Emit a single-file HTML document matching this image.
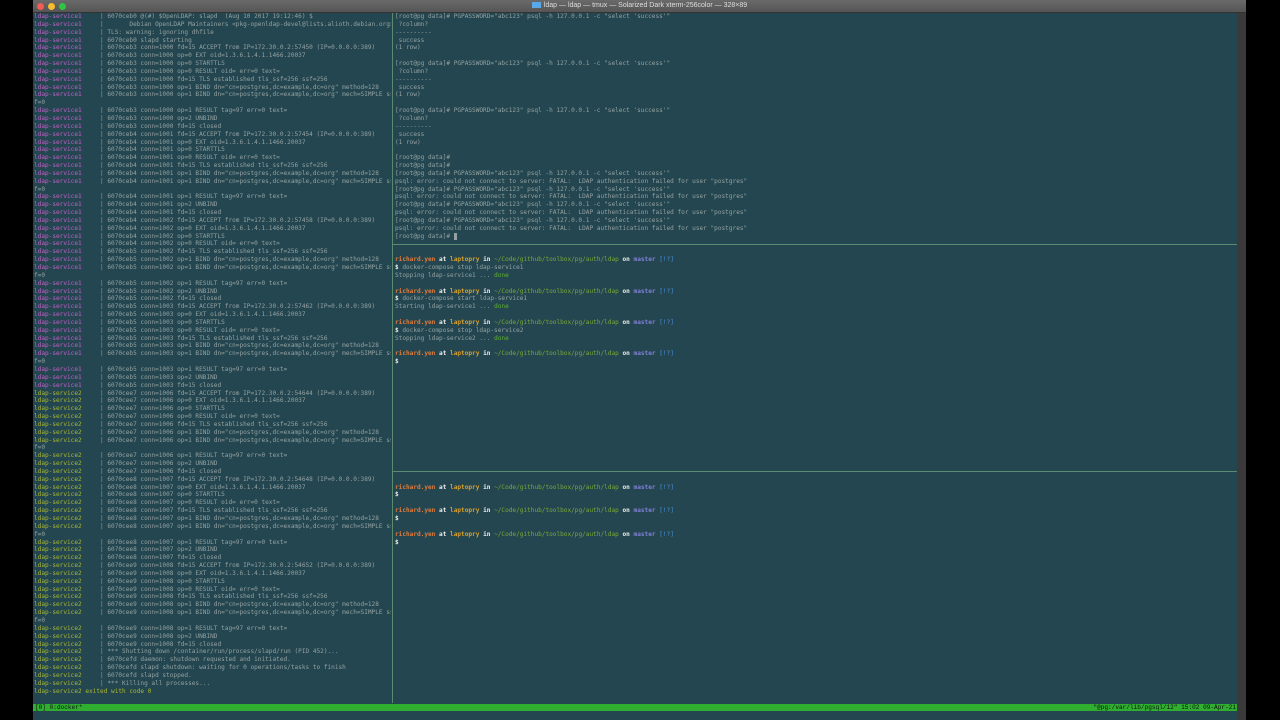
<!DOCTYPE html>
<html><head><meta charset="utf-8"><style>
body{margin:0;width:1280px;height:720px;background:#000;overflow:hidden;position:relative;font-family:"Liberation Mono",monospace}
#win{position:absolute;left:33px;top:0;width:1213px;height:720px;background:#244650}
#title{position:absolute;left:0;top:0;width:1213px;height:12px;background:linear-gradient(#6a6a6a,#555);border-bottom:1px solid #333;font-family:"Liberation Sans",sans-serif;font-size:7px;color:#ddd;text-align:center;line-height:12px}
.dot{position:absolute;top:3px;width:7px;height:7px;border-radius:50%}
#sb{position:absolute;left:1204px;top:13px;width:9px;height:707px;background:#3a3a3a}
pre{position:absolute;margin:0;font-size:6.1px;line-height:7.845px;color:#93a1a1;overflow:hidden;white-space:pre}
.a{color:#c060c8}.b{color:#a9b830}
.o{color:#e07a3a;font-weight:bold}.w{color:#eee;font-weight:bold}.y{color:#d8a030;font-weight:bold}.g{color:#7aa838}.m{color:#8080d8;font-weight:bold}.bl{color:#4a90d8}.d{color:#5fb030}
#vd{position:absolute;left:359px;top:13px;width:1px;height:690px;background:#5a8a70}
.hd{position:absolute;left:360px;width:844px;height:1px;background:#5a8a70}
#st{position:absolute;left:0;top:704px;width:1204px;height:7px;background:#2fae2f;font-size:6.1px;line-height:7px;color:#111}
</style></head><body>
<div id="win">
<div id="title"><span class="dot" style="left:4px;background:#f25c54"></span><span class="dot" style="left:15px;background:#f6be2f"></span><span class="dot" style="left:26px;background:#2fc63f"></span><span style="display:inline-block;width:9px;height:6px;background:#5aa9e6;vertical-align:middle;margin-right:3px"></span>ldap — ldap — tmux — Solarized Dark xterm-256color — 328×89</div>
<div id="sb"></div>
<pre style="left:1px;top:13px;width:357px;height:690px"><span class="a">ldap-service1</span>     | 6070ceb0 @(#) $OpenLDAP: slapd  (Aug 10 2017 19:12:46) $
<span class="a">ldap-service1</span>     |       Debian OpenLDAP Maintainers &lt;pkg-openldap-devel@lists.alioth.debian.org&gt;
<span class="a">ldap-service1</span>     | TLS: warning: ignoring dhfile
<span class="a">ldap-service1</span>     | 6070ceb0 slapd starting
<span class="a">ldap-service1</span>     | 6070ceb3 conn=1000 fd=15 ACCEPT from IP=172.30.0.2:57450 (IP=0.0.0.0:389)
<span class="a">ldap-service1</span>     | 6070ceb3 conn=1000 op=0 EXT oid=1.3.6.1.4.1.1466.20037
<span class="a">ldap-service1</span>     | 6070ceb3 conn=1000 op=0 STARTTLS
<span class="a">ldap-service1</span>     | 6070ceb3 conn=1000 op=0 RESULT oid= err=0 text=
<span class="a">ldap-service1</span>     | 6070ceb3 conn=1000 fd=15 TLS established tls_ssf=256 ssf=256
<span class="a">ldap-service1</span>     | 6070ceb3 conn=1000 op=1 BIND dn="cn=postgres,dc=example,dc=org" method=128
<span class="a">ldap-service1</span>     | 6070ceb3 conn=1000 op=1 BIND dn="cn=postgres,dc=example,dc=org" mech=SIMPLE ss
f=0
<span class="a">ldap-service1</span>     | 6070ceb3 conn=1000 op=1 RESULT tag=97 err=0 text=
<span class="a">ldap-service1</span>     | 6070ceb3 conn=1000 op=2 UNBIND
<span class="a">ldap-service1</span>     | 6070ceb3 conn=1000 fd=15 closed
<span class="a">ldap-service1</span>     | 6070ceb4 conn=1001 fd=15 ACCEPT from IP=172.30.0.2:57454 (IP=0.0.0.0:389)
<span class="a">ldap-service1</span>     | 6070ceb4 conn=1001 op=0 EXT oid=1.3.6.1.4.1.1466.20037
<span class="a">ldap-service1</span>     | 6070ceb4 conn=1001 op=0 STARTTLS
<span class="a">ldap-service1</span>     | 6070ceb4 conn=1001 op=0 RESULT oid= err=0 text=
<span class="a">ldap-service1</span>     | 6070ceb4 conn=1001 fd=15 TLS established tls_ssf=256 ssf=256
<span class="a">ldap-service1</span>     | 6070ceb4 conn=1001 op=1 BIND dn="cn=postgres,dc=example,dc=org" method=128
<span class="a">ldap-service1</span>     | 6070ceb4 conn=1001 op=1 BIND dn="cn=postgres,dc=example,dc=org" mech=SIMPLE ss
f=0
<span class="a">ldap-service1</span>     | 6070ceb4 conn=1001 op=1 RESULT tag=97 err=0 text=
<span class="a">ldap-service1</span>     | 6070ceb4 conn=1001 op=2 UNBIND
<span class="a">ldap-service1</span>     | 6070ceb4 conn=1001 fd=15 closed
<span class="a">ldap-service1</span>     | 6070ceb4 conn=1002 fd=15 ACCEPT from IP=172.30.0.2:57458 (IP=0.0.0.0:389)
<span class="a">ldap-service1</span>     | 6070ceb4 conn=1002 op=0 EXT oid=1.3.6.1.4.1.1466.20037
<span class="a">ldap-service1</span>     | 6070ceb4 conn=1002 op=0 STARTTLS
<span class="a">ldap-service1</span>     | 6070ceb4 conn=1002 op=0 RESULT oid= err=0 text=
<span class="a">ldap-service1</span>     | 6070ceb5 conn=1002 fd=15 TLS established tls_ssf=256 ssf=256
<span class="a">ldap-service1</span>     | 6070ceb5 conn=1002 op=1 BIND dn="cn=postgres,dc=example,dc=org" method=128
<span class="a">ldap-service1</span>     | 6070ceb5 conn=1002 op=1 BIND dn="cn=postgres,dc=example,dc=org" mech=SIMPLE ss
f=0
<span class="a">ldap-service1</span>     | 6070ceb5 conn=1002 op=1 RESULT tag=97 err=0 text=
<span class="a">ldap-service1</span>     | 6070ceb5 conn=1002 op=2 UNBIND
<span class="a">ldap-service1</span>     | 6070ceb5 conn=1002 fd=15 closed
<span class="a">ldap-service1</span>     | 6070ceb5 conn=1003 fd=15 ACCEPT from IP=172.30.0.2:57462 (IP=0.0.0.0:389)
<span class="a">ldap-service1</span>     | 6070ceb5 conn=1003 op=0 EXT oid=1.3.6.1.4.1.1466.20037
<span class="a">ldap-service1</span>     | 6070ceb5 conn=1003 op=0 STARTTLS
<span class="a">ldap-service1</span>     | 6070ceb5 conn=1003 op=0 RESULT oid= err=0 text=
<span class="a">ldap-service1</span>     | 6070ceb5 conn=1003 fd=15 TLS established tls_ssf=256 ssf=256
<span class="a">ldap-service1</span>     | 6070ceb5 conn=1003 op=1 BIND dn="cn=postgres,dc=example,dc=org" method=128
<span class="a">ldap-service1</span>     | 6070ceb5 conn=1003 op=1 BIND dn="cn=postgres,dc=example,dc=org" mech=SIMPLE ss
f=0
<span class="a">ldap-service1</span>     | 6070ceb5 conn=1003 op=1 RESULT tag=97 err=0 text=
<span class="a">ldap-service1</span>     | 6070ceb5 conn=1003 op=2 UNBIND
<span class="a">ldap-service1</span>     | 6070ceb5 conn=1003 fd=15 closed
<span class="b">ldap-service2</span>     | 6070cee7 conn=1006 fd=15 ACCEPT from IP=172.30.0.2:54644 (IP=0.0.0.0:389)
<span class="b">ldap-service2</span>     | 6070cee7 conn=1006 op=0 EXT oid=1.3.6.1.4.1.1466.20037
<span class="b">ldap-service2</span>     | 6070cee7 conn=1006 op=0 STARTTLS
<span class="b">ldap-service2</span>     | 6070cee7 conn=1006 op=0 RESULT oid= err=0 text=
<span class="b">ldap-service2</span>     | 6070cee7 conn=1006 fd=15 TLS established tls_ssf=256 ssf=256
<span class="b">ldap-service2</span>     | 6070cee7 conn=1006 op=1 BIND dn="cn=postgres,dc=example,dc=org" method=128
<span class="b">ldap-service2</span>     | 6070cee7 conn=1006 op=1 BIND dn="cn=postgres,dc=example,dc=org" mech=SIMPLE ss
f=0
<span class="b">ldap-service2</span>     | 6070cee7 conn=1006 op=1 RESULT tag=97 err=0 text=
<span class="b">ldap-service2</span>     | 6070cee7 conn=1006 op=2 UNBIND
<span class="b">ldap-service2</span>     | 6070cee7 conn=1006 fd=15 closed
<span class="b">ldap-service2</span>     | 6070cee8 conn=1007 fd=15 ACCEPT from IP=172.30.0.2:54648 (IP=0.0.0.0:389)
<span class="b">ldap-service2</span>     | 6070cee8 conn=1007 op=0 EXT oid=1.3.6.1.4.1.1466.20037
<span class="b">ldap-service2</span>     | 6070cee8 conn=1007 op=0 STARTTLS
<span class="b">ldap-service2</span>     | 6070cee8 conn=1007 op=0 RESULT oid= err=0 text=
<span class="b">ldap-service2</span>     | 6070cee8 conn=1007 fd=15 TLS established tls_ssf=256 ssf=256
<span class="b">ldap-service2</span>     | 6070cee8 conn=1007 op=1 BIND dn="cn=postgres,dc=example,dc=org" method=128
<span class="b">ldap-service2</span>     | 6070cee8 conn=1007 op=1 BIND dn="cn=postgres,dc=example,dc=org" mech=SIMPLE ss
f=0
<span class="b">ldap-service2</span>     | 6070cee8 conn=1007 op=1 RESULT tag=97 err=0 text=
<span class="b">ldap-service2</span>     | 6070cee8 conn=1007 op=2 UNBIND
<span class="b">ldap-service2</span>     | 6070cee8 conn=1007 fd=15 closed
<span class="b">ldap-service2</span>     | 6070cee9 conn=1008 fd=15 ACCEPT from IP=172.30.0.2:54652 (IP=0.0.0.0:389)
<span class="b">ldap-service2</span>     | 6070cee9 conn=1008 op=0 EXT oid=1.3.6.1.4.1.1466.20037
<span class="b">ldap-service2</span>     | 6070cee9 conn=1008 op=0 STARTTLS
<span class="b">ldap-service2</span>     | 6070cee9 conn=1008 op=0 RESULT oid= err=0 text=
<span class="b">ldap-service2</span>     | 6070cee9 conn=1008 fd=15 TLS established tls_ssf=256 ssf=256
<span class="b">ldap-service2</span>     | 6070cee9 conn=1008 op=1 BIND dn="cn=postgres,dc=example,dc=org" method=128
<span class="b">ldap-service2</span>     | 6070cee9 conn=1008 op=1 BIND dn="cn=postgres,dc=example,dc=org" mech=SIMPLE ss
f=0
<span class="b">ldap-service2</span>     | 6070cee9 conn=1008 op=1 RESULT tag=97 err=0 text=
<span class="b">ldap-service2</span>     | 6070cee9 conn=1008 op=2 UNBIND
<span class="b">ldap-service2</span>     | 6070cee9 conn=1008 fd=15 closed
<span class="b">ldap-service2</span>     | *** Shutting down /container/run/process/slapd/run (PID 452)...
<span class="b">ldap-service2</span>     | 6070cefd daemon: shutdown requested and initiated.
<span class="b">ldap-service2</span>     | 6070cefd slapd shutdown: waiting for 0 operations/tasks to finish
<span class="b">ldap-service2</span>     | 6070cefd slapd stopped.
<span class="b">ldap-service2</span>     | *** Killing all processes...
<span class="b">ldap-service2 exited with code 0</span></pre>
<div id="vd"></div>
<div class="hd" style="top:244px"></div>
<div class="hd" style="top:471px"></div>
<pre style="left:362px;top:13px;width:840px;height:690px">[root@pg data]# PGPASSWORD="abc123" psql -h 127.0.0.1 -c "select 'success'"
 ?column?
----------
 success
(1 row)

[root@pg data]# PGPASSWORD="abc123" psql -h 127.0.0.1 -c "select 'success'"
 ?column?
----------
 success
(1 row)

[root@pg data]# PGPASSWORD="abc123" psql -h 127.0.0.1 -c "select 'success'"
 ?column?
----------
 success
(1 row)

[root@pg data]#
[root@pg data]#
[root@pg data]# PGPASSWORD="abc123" psql -h 127.0.0.1 -c "select 'success'"
psql: error: could not connect to server: FATAL:  LDAP authentication failed for user "postgres"
[root@pg data]# PGPASSWORD="abc123" psql -h 127.0.0.1 -c "select 'success'"
psql: error: could not connect to server: FATAL:  LDAP authentication failed for user "postgres"
[root@pg data]# PGPASSWORD="abc123" psql -h 127.0.0.1 -c "select 'success'"
psql: error: could not connect to server: FATAL:  LDAP authentication failed for user "postgres"
[root@pg data]# PGPASSWORD="abc123" psql -h 127.0.0.1 -c "select 'success'"
psql: error: could not connect to server: FATAL:  LDAP authentication failed for user "postgres"
[root@pg data]# <span style="background:#93a1a1">&#160;</span>


<span class="o">richard.yen</span> <span class="w">at</span> <span class="y">laptopry</span> <span class="w">in</span> <span class="g">~/Code/github/toolbox/pg/auth/ldap</span> <span class="w">on</span> <span class="m">master</span> <span class="bl">[!?]</span>
<span class="w">$</span> docker-compose stop ldap-service1
Stopping ldap-service1 ... <span class="d">done</span>

<span class="o">richard.yen</span> <span class="w">at</span> <span class="y">laptopry</span> <span class="w">in</span> <span class="g">~/Code/github/toolbox/pg/auth/ldap</span> <span class="w">on</span> <span class="m">master</span> <span class="bl">[!?]</span>
<span class="w">$</span> docker-compose start ldap-service1
Starting ldap-service1 ... <span class="d">done</span>

<span class="o">richard.yen</span> <span class="w">at</span> <span class="y">laptopry</span> <span class="w">in</span> <span class="g">~/Code/github/toolbox/pg/auth/ldap</span> <span class="w">on</span> <span class="m">master</span> <span class="bl">[!?]</span>
<span class="w">$</span> docker-compose stop ldap-service2
Stopping ldap-service2 ... <span class="d">done</span>

<span class="o">richard.yen</span> <span class="w">at</span> <span class="y">laptopry</span> <span class="w">in</span> <span class="g">~/Code/github/toolbox/pg/auth/ldap</span> <span class="w">on</span> <span class="m">master</span> <span class="bl">[!?]</span>
<span class="w">$</span>















<span class="o">richard.yen</span> <span class="w">at</span> <span class="y">laptopry</span> <span class="w">in</span> <span class="g">~/Code/github/toolbox/pg/auth/ldap</span> <span class="w">on</span> <span class="m">master</span> <span class="bl">[!?]</span>
<span class="w">$</span>

<span class="o">richard.yen</span> <span class="w">at</span> <span class="y">laptopry</span> <span class="w">in</span> <span class="g">~/Code/github/toolbox/pg/auth/ldap</span> <span class="w">on</span> <span class="m">master</span> <span class="bl">[!?]</span>
<span class="w">$</span>

<span class="o">richard.yen</span> <span class="w">at</span> <span class="y">laptopry</span> <span class="w">in</span> <span class="g">~/Code/github/toolbox/pg/auth/ldap</span> <span class="w">on</span> <span class="m">master</span> <span class="bl">[!?]</span>
<span class="w">$</span></pre>
<div id="st"><span style="position:absolute;left:2px">[0] 0:docker*</span><span style="position:absolute;right:1px">"@pg:/var/lib/pgsql/12" 15:02 09-Apr-21</span></div>
</div>
</body></html>
